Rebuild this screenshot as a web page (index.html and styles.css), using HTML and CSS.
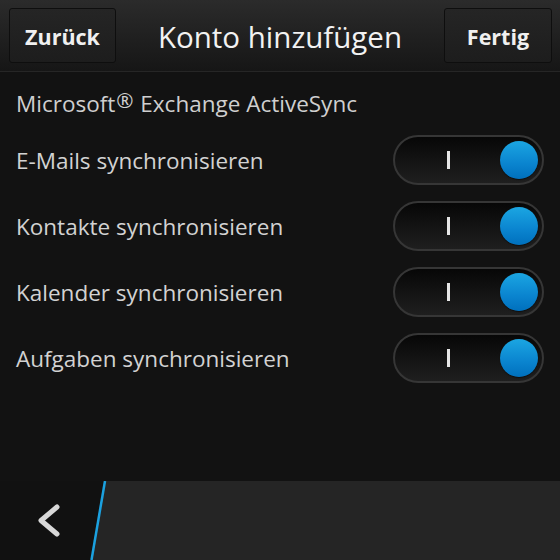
FILE: index.html
```html
<!DOCTYPE html>
<html lang="de">
<head>
<meta charset="utf-8">
<link rel="stylesheet" href="styles.css">
</head>
<body>
<div class="screen">
  <header class="titlebar">
    <button class="tbtn">Zurück</button>
    <h1 class="title">Konto hinzufügen</h1>
    <button class="tbtn tbtn-right">Fertig</button>
  </header>
  <main class="content">
    <div class="account">Microsoft<sup>®</sup> Exchange ActiveSync</div>
    <div class="row"><span class="label">E-Mails synchronisieren</span><span class="toggle"><span class="bar"></span><span class="knob"></span></span></div>
    <div class="row"><span class="label">Kontakte synchronisieren</span><span class="toggle"><span class="bar"></span><span class="knob"></span></span></div>
    <div class="row"><span class="label">Kalender synchronisieren</span><span class="toggle"><span class="bar"></span><span class="knob"></span></span></div>
    <div class="row"><span class="label">Aufgaben synchronisieren</span><span class="toggle"><span class="bar"></span><span class="knob"></span></span></div>
  </main>
  <footer class="actionbar">
    <svg class="backarea" width="110" height="79" viewBox="0 0 110 79">
      <polygon points="0,0 105,0 91,79 0,79" fill="#111111"/>
      <line x1="105" y1="0" x2="91.5" y2="79" stroke="#1ba1e0" stroke-width="2.5"/>
      <polyline points="57,26 41,39.5 57,53" fill="none" stroke="#d8d8d8" stroke-width="5" stroke-linecap="round" stroke-linejoin="round"/>
    </svg>
    <div class="panel"></div>
  </footer>
</div>
</body>
</html>
```
FILE: styles.css
```css
html, body {
  margin: 0;
  padding: 0;
  background: #121212;
}
.screen {
  width: 560px;
  height: 560px;
  display: flex;
  flex-direction: column;
  font-family: "Open Sans", "DejaVu Sans", sans-serif;
  background: #121212;
  overflow: hidden;
}
.titlebar {
  height: 72px;
  box-sizing: border-box;
  display: flex;
  align-items: center;
  justify-content: space-between;
  padding: 0 8px 0 9px;
  background: linear-gradient(#2b2b2b, #161616);
  border-bottom: 1px solid #262626;
}
.tbtn {
  height: 55px;
  width: 107px;
  border: 1px solid #0e0e0e;
  border-radius: 3px;
  background: linear-gradient(#252525, #1d1d1d);
  color: #f0f0f0;
  font-family: "Open Sans", sans-serif;
  font-weight: 700;
  font-size: 21.5px;
  padding: 2px 0 0 0;
}
.tbtn-right {
  width: 108px;
}
.title {
  margin: 0;
  padding-top: 2px;
  font-weight: 400;
  font-size: 29.5px;
  color: #f2f2f2;
}
.content {
  flex: 1;
  padding: 18px 16px 0 16px;
}
.account {
  color: #cfcfcf;
  font-size: 22.5px;
  height: 37px;
  line-height: 28px;
}
.account sup {
  font-size: 0.92em;
  vertical-align: 0.2em;
  line-height: 0;
  margin: 0 1px;
}
.row {
  height: 66px;
  display: flex;
  align-items: center;
  justify-content: space-between;
}
.label {
  color: #d2d2d2;
  font-size: 22.5px;
}
.toggle {
  width: 151px;
  height: 50px;
  box-sizing: border-box;
  border: 2px solid #363636;
  border-radius: 25px;
  background: linear-gradient(#070707, #1f1f1f);
  display: flex;
  align-items: center;
  justify-content: space-between;
  padding: 0 4px 0 52px;
}
.bar {
  width: 3px;
  height: 18px;
  background: #e6e6e6;
}
.knob {
  width: 38px;
  height: 38px;
  border-radius: 50%;
  background: linear-gradient(#1ba6e2, #0a84cf 60%, #0070bd);
  box-shadow: 0 1px 1px rgba(0,0,0,0.5);
}
.actionbar {
  height: 79px;
  display: flex;
  background: #252525;
}
.backarea {
  display: block;
  flex: none;
}
.panel {
  flex: 1;
}
```
